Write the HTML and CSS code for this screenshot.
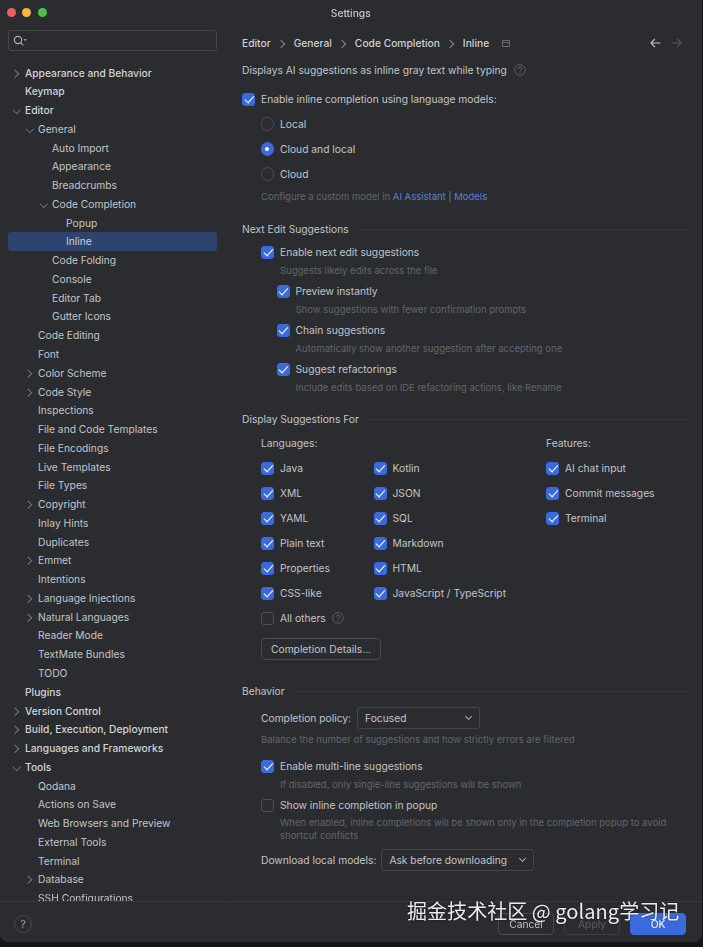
FILE: index.html
```html
<!DOCTYPE html>
<html lang="en">
<head>
    <meta charset="UTF-8">
    <title>Settings</title>
    <link rel="stylesheet" href="styles.css">
</head>
<body>
<div class="window">

    <!-- Title bar -->
    <div class="titlebar">
        <span class="light red"></span>
        <span class="light yellow"></span>
        <span class="light green"></span>
        <span class="title">Settings</span>
    </div>

    <div class="main">

        <!-- Settings tree -->
        <div class="sidebar">
            <div class="search">
                <svg width="15" height="12" viewBox="0 0 15 12"><circle cx="5" cy="5" r="3.6" fill="none" stroke="#b4b6bb" stroke-width="1.1"/><path d="M7.6 7.7 10.2 10.4" stroke="#b4b6bb" stroke-width="1.1"/><path d="M10.5 4.2h3.4l-1.700 1.900z" fill="#b4b6bb"/></svg>
            </div>
            <div class="tree">
                <div class="item l0 closed">Appearance and Behavior</div>
                <div class="item l0">Keymap</div>
                <div class="item l0 open">Editor</div>
                <div class="item l1 open">General</div>
                <div class="item l2">Auto Import</div>
                <div class="item l2">Appearance</div>
                <div class="item l2">Breadcrumbs</div>
                <div class="item l2 open">Code Completion</div>
                <div class="item l3">Popup</div>
                <div class="item l3 selected">Inline</div>
                <div class="item l2">Code Folding</div>
                <div class="item l2">Console</div>
                <div class="item l2">Editor Tab</div>
                <div class="item l2">Gutter Icons</div>
                <div class="item l1">Code Editing</div>
                <div class="item l1">Font</div>
                <div class="item l1 closed">Color Scheme</div>
                <div class="item l1 closed">Code Style</div>
                <div class="item l1">Inspections</div>
                <div class="item l1">File and Code Templates</div>
                <div class="item l1">File Encodings</div>
                <div class="item l1">Live Templates</div>
                <div class="item l1">File Types</div>
                <div class="item l1 closed">Copyright</div>
                <div class="item l1">Inlay Hints</div>
                <div class="item l1">Duplicates</div>
                <div class="item l1 closed">Emmet</div>
                <div class="item l1">Intentions</div>
                <div class="item l1 closed">Language Injections</div>
                <div class="item l1 closed">Natural Languages</div>
                <div class="item l1">Reader Mode</div>
                <div class="item l1">TextMate Bundles</div>
                <div class="item l1">TODO</div>
                <div class="item l0">Plugins</div>
                <div class="item l0 closed">Version Control</div>
                <div class="item l0 closed">Build, Execution, Deployment</div>
                <div class="item l0 closed">Languages and Frameworks</div>
                <div class="item l0 open">Tools</div>
                <div class="item l1">Qodana</div>
                <div class="item l1">Actions on Save</div>
                <div class="item l1">Web Browsers and Preview</div>
                <div class="item l1">External Tools</div>
                <div class="item l1">Terminal</div>
                <div class="item l1 closed">Database</div>
                <div class="item l1">SSH Configurations</div>
            </div>
        </div>

        <!-- Settings page -->
        <div class="content">
            <div class="crumbs">
                <span>Editor</span><i class="sep"></i>
                <span>General</span><i class="sep"></i>
                <span>Code Completion</span><i class="sep"></i>
                <span>Inline</span>
                <svg class="crumb-icon" width="8" height="7" viewBox="0 0 8 7"><path d="M.5.5h7v6h-7zM.5 2.5h7" fill="none" stroke="#6f7278" stroke-width=".9"/></svg>
                <div class="nav">
                    <svg width="11" height="10" viewBox="0 0 11 10"><path d="M10.5 5H1M4.8 1 1 5l3.8 4" fill="none" stroke="#c0c2c7" stroke-width="1.1"/></svg>
                    <svg width="11" height="10" viewBox="0 0 11 10"><path d="M.5 5H10M6.2 1 10 5 6.2 9" fill="none" stroke="#54575c" stroke-width="1.1"/></svg>
                </div>
            </div>

            <div class="desc">Displays AI suggestions as inline gray text while typing
                <svg class="help" width="12" height="12" viewBox="0 0 12 12"><use href="#q"/></svg>
            </div>

            <label class="check on top-check"><i class="box"></i>Enable inline completion using language models:</label>
            <div class="radios">
                <label class="radio"><i class="dot"></i>Local</label>
                <label class="radio on"><i class="dot"></i>Cloud and local</label>
                <label class="radio"><i class="dot"></i>Cloud</label>
            </div>
            <div class="hint configure">Configure a custom model in <a class="link">AI Assistant | Models</a></div>

            <div class="group-title next-title">Next Edit Suggestions</div>
            <div class="indent next-list">
                <label class="check on"><i class="box"></i>Enable next edit suggestions</label>
                <div class="hint under">Suggests likely edits across the file</div>
                <div class="nested">
                    <label class="check on spaced"><i class="box"></i>Preview instantly</label>
                    <div class="hint under">Show suggestions with fewer confirmation prompts</div>
                    <label class="check on spaced"><i class="box"></i>Chain suggestions</label>
                    <div class="hint under">Automatically show another suggestion after accepting one</div>
                    <label class="check on spaced"><i class="box"></i>Suggest refactorings</label>
                    <div class="hint under">Include edits based on IDE refactoring actions, like Rename</div>
                </div>
            </div>

            <div class="group-title display-title">Display Suggestions For</div>
            <div class="indent">
                <div class="columns">
                    <div class="col-head">Languages:</div>
                    <div></div>
                    <div class="col-head">Features:</div>

                    <label class="check on"><i class="box"></i>Java</label>
                    <label class="check on"><i class="box"></i>Kotlin</label>
                    <label class="check on"><i class="box"></i>AI chat input</label>

                    <label class="check on"><i class="box"></i>XML</label>
                    <label class="check on"><i class="box"></i>JSON</label>
                    <label class="check on"><i class="box"></i>Commit messages</label>

                    <label class="check on"><i class="box"></i>YAML</label>
                    <label class="check on"><i class="box"></i>SQL</label>
                    <label class="check on"><i class="box"></i>Terminal</label>

                    <label class="check on"><i class="box"></i>Plain text</label>
                    <label class="check on"><i class="box"></i>Markdown</label>
                    <div></div>

                    <label class="check on"><i class="box"></i>Properties</label>
                    <label class="check on"><i class="box"></i>HTML</label>
                    <div></div>

                    <label class="check on"><i class="box"></i>CSS-like</label>
                    <label class="check on"><i class="box"></i>JavaScript / TypeScript</label>
                    <div></div>

                    <label class="check others"><i class="box"></i><span>All others</span>
                        <svg class="help" width="12" height="12" viewBox="0 0 12 12"><use href="#q"/></svg>
                    </label>
                </div>
                <button class="btn details">Completion Details...</button>
            </div>

            <div class="group-title behavior-title">Behavior</div>
            <div class="indent">
                <div class="field policy">
                    <span>Completion policy:</span>
                    <div class="select policy-select">Focused<i class="caret"></i></div>
                </div>
                <div class="hint balance">Balance the number of suggestions and how strictly errors are filtered</div>
                <label class="check on multi"><i class="box"></i>Enable multi-line suggestions</label>
                <div class="hint under">If disabled, only single-line suggestions will be shown</div>
                <label class="check spaced"><i class="box"></i>Show inline completion in popup</label>
                <div class="hint under two-lines">When enabled, inline completions will be shown only in the completion popup to avoid shortcut conflicts</div>
                <div class="field download">
                    <span>Download local models:</span>
                    <div class="select download-select">Ask before downloading<i class="caret"></i></div>
                </div>
            </div>
        </div>
    </div>

    <!-- Bottom buttons -->
    <div class="footer">
        <div class="round-help">?</div>
        <div class="actions">
            <button class="btn">Cancel</button>
            <button class="btn disabled">Apply</button>
            <button class="btn primary">OK</button>
        </div>
    </div>

    <div class="watermark">掘金技术社区 @ golang学习记</div>
</div>

<svg class="defs" width="0" height="0">
    <symbol id="q" viewBox="0 0 12 12">
        <circle cx="6" cy="6" r="5.3" fill="none" stroke="#5f6268" stroke-width=".9"/>
        <path d="M4.5 4.7c0-2 3.2-2 3.2-.1 0 1.300-1.700 1.300-1.700 2.800" fill="none" stroke="#6f7278" stroke-width=".9"/>
        <circle cx="6" cy="9" r=".6" fill="#6f7278"/>
    </symbol>
</svg>
</body>
</html>
```

FILE: styles.css
```css
* {
    margin: 0;
    padding: 0;
    box-sizing: border-box;
}

html, body {
    height: 100%;
    background: #141517;
    overflow: hidden;
}

body {
    font-family: 'Inter', 'Liberation Sans', sans-serif;
    font-size: 10.25px;
    color: #c3c5ca;
}

label {
    display: flex;
    align-items: center;
}

.defs {
    position: absolute;
}

/* Window */
.window {
    position: relative;
    width: 701.5px;
    height: 942px;
    display: flex;
    flex-direction: column;
    background: #2a2c30;
    border-bottom-left-radius: 8px;
    border-bottom-right-radius: 8px;
    overflow: hidden;
    filter: blur(.45px);
}

.titlebar {
    position: relative;
    flex: none;
    height: 25px;
    display: flex;
    align-items: center;
    gap: 6.500px;
    padding-left: 6.500px;
}

.light {
    width: 9px;
    height: 9px;
    border-radius: 50%;
}

.red { background: #ee5f5b; }
.yellow { background: #f4b840; }
.green { background: #4fc04f; }

.title {
    position: absolute;
    left: 0;
    right: 0;
    text-align: center;
    font-weight: 500;
}

.main {
    flex: 1;
    min-height: 0;
    display: flex;
}

/* Sidebar */
.sidebar {
    flex: none;
    width: 226px;
    height: 100%;
    padding: 5px 8px 0 8px;
    overflow: hidden;
    border-right: 1px solid #2e3034;
}

.search {
    height: 21px;
    display: flex;
    align-items: center;
    padding-left: 4px;
    border: 1px solid #44464b;
    border-radius: 3px;
    margin-bottom: 12.500px;
}

.item {
    position: relative;
    height: 18.77px;
    line-height: 18.77px;
    white-space: nowrap;
}

.l0 { padding-left: 17px; font-weight: 500; color: #d2d4d8; }
.l1 { padding-left: 30px; }
.l2 { padding-left: 44px; }
.l3 { padding-left: 58px; }

.selected {
    background: #2e436e;
    border-radius: 3px;
    color: #c9cfdb;
}

/* chevrons in the tree */
.closed::before,
.open::before {
    content: "";
    position: absolute;
    top: 7px;
    width: 4.500px;
    height: 4.500px;
    border-right: 1px solid #73767b;
    border-bottom: 1px solid #73767b;
}

.closed::before { transform: rotate(-45deg); }
.open::before { transform: rotate(45deg); top: 6px; }

.l0::before { left: 3.500px; }
.l1::before { left: 16.500px; }
.l2::before { left: 30.500px; }

.open.l0::before { left: 5.500px; }
.open.l1::before { left: 18.500px; }
.open.l2::before { left: 32.500px; }

/* Content */
.content {
    flex: 1;
    min-width: 0;
    height: 100%;
    padding: 0 13.500px 0 16px;
    overflow: hidden;
}

.crumbs {
    height: 36px;
    display: flex;
    align-items: center;
    font-weight: 500;
    color: #cfd1d5;
}

.sep {
    position: relative;
    flex: none;
    width: 23px;
    height: 10px;
}

.sep::after {
    content: "";
    position: absolute;
    left: 7px;
    top: 2.500px;
    width: 5px;
    height: 5px;
    border-right: 1px solid #85888d;
    border-bottom: 1px solid #85888d;
    transform: rotate(-45deg);
}

.crumb-icon {
    margin-left: 13px;
}

.nav {
    margin-left: auto;
    margin-right: 6px;
    display: flex;
    gap: 10px;
}

.desc {
    height: 18px;
    display: flex;
    align-items: center;
    gap: 7px;
}

.help {
    flex: none;
}

.check, .radio {
    height: 18px;
}

.others .help {
    margin-left: 6px;
}

.box {
    flex: none;
    position: relative;
    width: 13px;
    height: 13px;
    margin-right: 6px;
    border: 1px solid #4e5056;
    border-radius: 3px;
}

.check.on .box {
    background: #3b6ade;
    border-color: #3b6ade;
}

.check.on .box::after {
    content: "";
    position: absolute;
    left: 3.500px;
    top: .5px;
    width: 4px;
    height: 7.500px;
    border-right: 1.500px solid #fff;
    border-bottom: 1.500px solid #fff;
    transform: rotate(42deg);
}

.top-check {
    margin-top: 11px;
}

.radios {
    margin-top: 3.500px;
    padding-left: 18.500px;
}

.radio {
    height: 25px;
}

.dot {
    flex: none;
    position: relative;
    width: 13.500px;
    height: 13.500px;
    margin-right: 6px;
    border: 1px solid #4e5056;
    border-radius: 50%;
}

.radio.on .dot {
    background: #3b6ade;
    border-color: #3b6ade;
}

.radio.on .dot::after {
    content: "";
    position: absolute;
    left: 3.750px;
    top: 3.750px;
    width: 4px;
    height: 4px;
    border-radius: 50%;
    background: #fff;
}

.hint {
    height: 14px;
    line-height: 14px;
    font-size: 9.500px;
    color: #63666b;
}

.under {
    margin-top: 3px;
    padding-left: 19px;
}

.two-lines {
    height: auto;
    line-height: 12.500px;
    padding-right: 10px;
}

.configure {
    margin-top: 3.500px;
    padding-left: 19px;
}

.link {
    color: #5a82d6;
}

.group-title {
    height: 18px;
    display: flex;
    align-items: center;
    gap: 8px;
}

.group-title::after {
    content: "";
    flex: 1;
    height: 1px;
    background: #34363a;
}

.next-title { margin-top: 16px; }
.display-title { margin-top: 15px; }
.behavior-title { margin-top: 22px; }

.next-list { margin-top: 5px; }

.indent {
    padding-left: 19px;
}

.nested {
    padding-left: 15.500px;
}

.spaced {
    margin-top: 4px;
}

/* Language columns */
.columns {
    display: grid;
    grid-template-columns: 112.500px 172.500px 1fr;
    grid-auto-rows: 25px;
    align-items: center;
    margin-top: 2.500px;
}

.col-head {
    color: #c3c5ca;
}

.btn {
    height: 22px;
    padding: 0 9px;
    font-family: inherit;
    font-size: 10.250px;
    color: #c3c5ca;
    background: transparent;
    border: 1px solid #4a4c51;
    border-radius: 4px;
    white-space: nowrap;
}

.details {
    display: block;
    width: 120px;
    margin-top: 7.500px;
}

/* Dropdown fields */
.field {
    height: 22px;
    display: flex;
    align-items: center;
    gap: 5px;
}

.policy { margin-top: 7px; gap: 6px; }
.download { margin-top: 7px; }

.select {
    height: 22px;
    display: flex;
    align-items: center;
    justify-content: space-between;
    padding: 0 8px 0 7px;
    border: 1px solid #44464b;
    border-radius: 3px;
}

.policy-select { width: 123px; }
.download-select { width: 152.500px; }

.caret {
    width: 5px;
    height: 5px;
    margin-top: -3px;
    border-right: 1px solid #a6a8ad;
    border-bottom: 1px solid #a6a8ad;
    transform: rotate(45deg);
}

.balance { margin-top: 4px; }
.multi { margin-top: 10px; }

/* Footer */
.footer {
    flex: none;
    height: 41px;
    padding: 3px 15.500px 0 14px;
    display: flex;
    align-items: center;
    justify-content: space-between;
    border-top: 1px solid #35373b;
}

.round-help {
    width: 18px;
    height: 18px;
    line-height: 16px;
    text-align: center;
    font-size: 11px;
    color: #9a9ca1;
    border: 1px solid #46484d;
    border-radius: 50%;
}

.actions {
    display: flex;
    gap: 10px;
}

.actions .btn {
    width: 56px;
    padding: 0;
}

.disabled {
    color: #5a5c61;
    border-color: #3c3e42;
}

.btn.primary {
    color: #fff;
    background: #3b6ade;
    border-color: #3b6ade;
}

/* Watermark over the dialog */
.watermark {
    position: absolute;
    left: 407px;
    top: 896px;
    font-family: 'Noto Sans CJK SC', sans-serif;
    font-size: 20px;
    letter-spacing: .05px;
    line-height: 29px;
    white-space: nowrap;
    color: #ececec;
    text-shadow: 0 0 2px rgba(0, 0, 0, .6);
}
```
